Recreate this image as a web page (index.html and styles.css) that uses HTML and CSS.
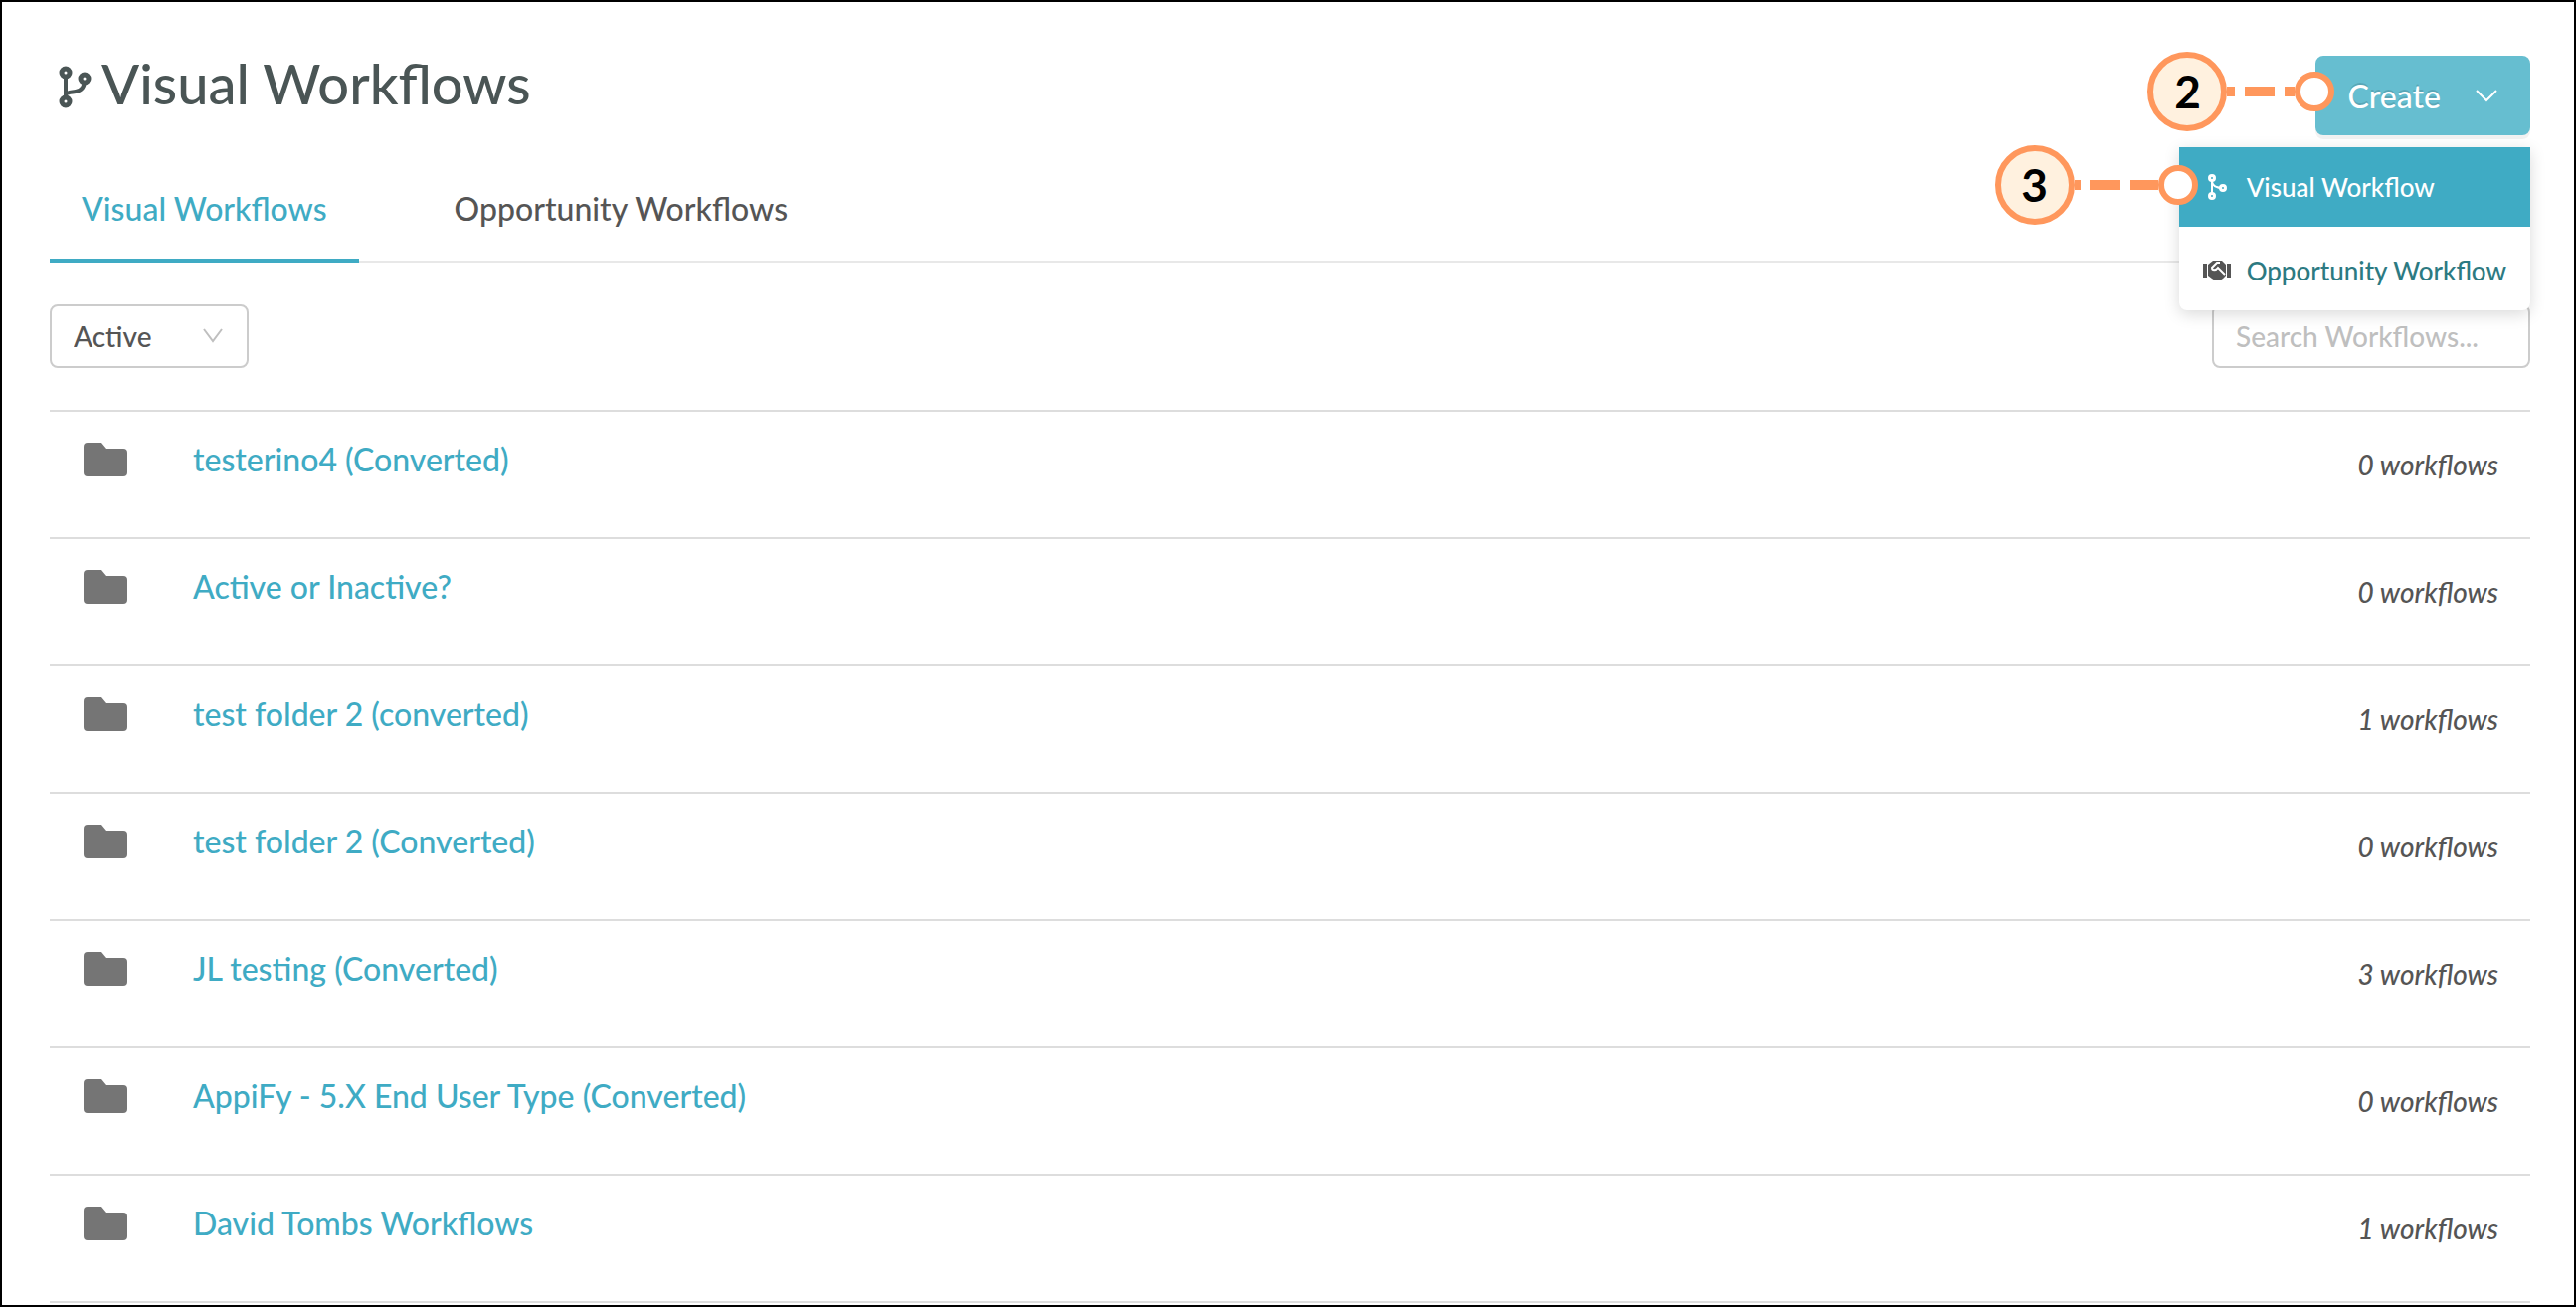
FILE: index.html
```html
<!DOCTYPE html>
<html lang="en">
    <head>
        <meta charset="UTF-8">
        <meta name="viewport" content="width=device-width, initial-scale=1.0">
        <title>Visual Workflows</title>
        <link rel="stylesheet" href="styles.css">
    </head>
    <body>
        <svg class="sprite" aria-hidden="true">
            <symbol id="folder" viewBox="0 0 44 34">
                <path d="M4 0h14l5 6h17a4 4 0 0 1 4 4v20a4 4 0 0 1-4 4H4a4 4 0 0 1-4-4V4a4 4 0 0 1 4-4z"/>
            </symbol>
        </svg>
        <header class="header">
            <h1 class="title">
                <svg class="title-icon" viewBox="0 0 44 52" aria-hidden="true">
                    <path d="M16 15v29M16 37c1-2 4-2 10-3 7-1 9-6 9-12"/>
                    <circle cx="16" cy="15" r="4"/>
                    <circle cx="35" cy="21" r="4"/>
                    <circle cx="16" cy="44" r="4"/>
                </svg>
                Visual Workflows
            </h1>
            <div class="create">
                <button class="create-button" type="button" aria-expanded="true">
                    Create
                    <svg class="create-arrow" viewBox="0 0 24 16" aria-hidden="true"><path d="M2 3l10 10L22 3"/></svg>
                </button>
                <div class="callout">
                    <span class="callout-number">2</span>
                    <svg class="callout-line" viewBox="0 0 68 10" aria-hidden="true"><path d="M0 0h8v10H0zM18 0h30v10H18zM58 0h10v10H58z"/></svg>
                    <span class="callout-dot"></span>
                </div>
                <ul class="menu">
                    <li class="menu-item">
                        <button class="menu-button active" type="button">
                            <svg class="menu-icon branch" viewBox="0 0 28 28" aria-hidden="true">
                                <path d="M9 5v18M9 9c1 5 5 6 11 6"/>
                                <circle cx="9" cy="5" r="2.5"/>
                                <circle cx="9" cy="23" r="2.5"/>
                                <circle cx="20" cy="15" r="2.5"/>
                            </svg>
                            Visual Workflow
                        </button>
                        <div class="callout">
                            <span class="callout-number">3</span>
                            <svg class="callout-line wide" viewBox="0 0 84 10" aria-hidden="true"><path d="M0 0h6v10H0zM15 0h31v10H15zM56 0h28v10H56z"/></svg>
                            <span class="callout-dot"></span>
                        </div>
                    </li>
                    <li class="menu-item">
                        <button class="menu-button" type="button">
                            <svg class="menu-icon" viewBox="0 0 28 28" aria-hidden="true">
                                <path d="M0 7h4v14H0zM24 7h4v14h-4zM5 8l5-4h9l4 4v11l-3 3-3 2h-5l-3-2-4-3z"/>
                                <path class="grip" d="M17 6h-3l-5 5c0 3 4 3 6 0l7 7"/>
                            </svg>
                            Opportunity Workflow
                        </button>
                    </li>
                </ul>
            </div>
        </header>
        <nav class="tabs">
            <a class="tab active" href="#visual">Visual Workflows</a>
            <a class="tab" href="#opportunity">Opportunity Workflows</a>
        </nav>
        <div class="filters">
            <div class="status">
                <select class="status-select" aria-label="Status">
                    <option>Active</option>
                    <option>Inactive</option>
                </select>
                <svg class="status-arrow" viewBox="0 0 20 16" aria-hidden="true"><path d="M1 1l9 12 9-12"/></svg>
            </div>
            <input class="search" type="text" placeholder="Search Workflows..." aria-label="Search Workflows">
        </div>
        <ul class="folders">
            <li class="folder">
                <svg class="folder-icon" aria-hidden="true"><use href="#folder"/></svg>
                <a class="folder-name" href="#">testerino4 (Converted)</a>
                <span class="folder-count">0 workflows</span>
            </li>
            <li class="folder">
                <svg class="folder-icon" aria-hidden="true"><use href="#folder"/></svg>
                <a class="folder-name" href="#">Active or Inactive?</a>
                <span class="folder-count">0 workflows</span>
            </li>
            <li class="folder">
                <svg class="folder-icon" aria-hidden="true"><use href="#folder"/></svg>
                <a class="folder-name" href="#">test folder 2 (converted)</a>
                <span class="folder-count">1 workflows</span>
            </li>
            <li class="folder">
                <svg class="folder-icon" aria-hidden="true"><use href="#folder"/></svg>
                <a class="folder-name" href="#">test folder 2 (Converted)</a>
                <span class="folder-count">0 workflows</span>
            </li>
            <li class="folder">
                <svg class="folder-icon" aria-hidden="true"><use href="#folder"/></svg>
                <a class="folder-name" href="#">JL testing (Converted)</a>
                <span class="folder-count">3 workflows</span>
            </li>
            <li class="folder">
                <svg class="folder-icon" aria-hidden="true"><use href="#folder"/></svg>
                <a class="folder-name" href="#">AppiFy - 5.X End User Type (Converted)</a>
                <span class="folder-count">0 workflows</span>
            </li>
            <li class="folder">
                <svg class="folder-icon" aria-hidden="true"><use href="#folder"/></svg>
                <a class="folder-name" href="#">David Tombs Workflows</a>
                <span class="folder-count">1 workflows</span>
            </li>
        </ul>
    </body>
</html>
```
FILE: styles.css
```css
* {
    box-sizing: border-box;
}
body {
    background: white;
    border: 2px solid black;
    color: #555;
    font-family: Lato, sans-serif;
    font-size: 28px;
    font-weight: 500;
    margin: 0;
    min-height: 100vh;
    padding: 54px 44px 2px 48px;
}
button, input, select {
    font: inherit;
}
a {
    text-decoration: none;
}
ul {
    list-style: none;
    margin: 0;
    padding: 0;
}
.sprite {
    display: none;
}
.header {
    align-items: flex-start;
    display: flex;
    justify-content: space-between;
    margin-bottom: 26px;
}
.title {
    align-items: center;
    color: #4a5555;
    display: flex;
    font-size: 56px;
    font-weight: 500;
    gap: 8px;
    line-height: 56px;
    margin: 0;
}
.title-icon {
    fill: none;
    height: 52px;
    stroke: #4a5555;
    stroke-width: 5;
    width: 44px;
}
.title-icon path {
    stroke-width: 4;
}
.title-icon circle {
    fill: white;
}
.create {
    position: relative;
}
.create-button {
    align-items: center;
    background: #66bed0;
    border: 0;
    border-radius: 8px;
    box-shadow: 0 4px 0 rgba(0, 0, 0, 0.05);
    color: white;
    cursor: pointer;
    display: flex;
    font-size: 32px;
    gap: 34px;
    height: 80px;
    padding: 0 32px;
    text-shadow: 0 -2px 0 rgba(0, 0, 0, 0.12);
}
.create-arrow {
    fill: none;
    height: 16px;
    stroke: white;
    stroke-width: 2;
    width: 24px;
}
.menu {
    background: white;
    border-radius: 0 0 8px 8px;
    box-shadow: 0 4px 16px rgba(0, 0, 0, 0.15);
    display: grid;
    gap: 4px;
    position: absolute;
    right: 0;
    top: 92px;
    z-index: 1;
}
.menu-item {
    position: relative;
}
.menu-button {
    align-items: center;
    background: none;
    border: 0;
    color: #2c7a82;
    cursor: pointer;
    display: flex;
    font-size: 26px;
    gap: 16px;
    height: 80px;
    padding: 0 24px;
    white-space: nowrap;
    width: 100%;
}
.menu-button.active {
    background: #3fabc4;
    color: white;
}
.menu-icon {
    fill: #555;
    height: 28px;
    width: 28px;
}
.menu-icon.branch {
    fill: #3fabc4;
    stroke: white;
    stroke-width: 3;
}
.menu-icon .grip {
    fill: none;
    stroke: white;
    stroke-width: 2;
}
.menu-icon.branch path {
    fill: none;
    stroke-width: 2;
}
.callout {
    align-items: center;
    display: flex;
    position: absolute;
    right: calc(100% - 19px);
    top: -4px;
    z-index: 2;
}
.menu .callout {
    top: -2px;
}
.callout-number {
    background: #fff1df;
    border: 6px solid #ff975c;
    border-radius: 50%;
    color: black;
    font-size: 46px;
    font-weight: bold;
    height: 80px;
    line-height: 68px;
    text-align: center;
    width: 80px;
}
.callout-line {
    fill: #ff975c;
    height: 10px;
    width: 68px;
}
.callout-line.wide {
    width: 84px;
}
.callout-dot {
    background: white;
    border: 6px solid #ff975c;
    border-radius: 50%;
    height: 40px;
    width: 40px;
}
.tabs {
    box-shadow: inset 0 -2px 0 #e8e8e8;
    display: flex;
    gap: 64px;
}
.tab {
    border-bottom: 4px solid transparent;
    color: #555;
    font-size: 32px;
    line-height: 48px;
    padding: 24px 32px 26px;
}
.tab.active {
    border-color: #3fabc4;
    color: #3fabc4;
}
.filters {
    display: flex;
    justify-content: space-between;
    margin: 42px 0;
}
.status {
    position: relative;
}
.status-select,
.search {
    background: white;
    border: 2px solid #ccc;
    border-radius: 8px;
    color: #555;
    height: 64px;
    padding: 0 22px;
}
.status-select {
    appearance: none;
    width: 200px;
}
.status-arrow {
    fill: none;
    height: 16px;
    pointer-events: none;
    position: absolute;
    right: 26px;
    stroke: #bfbfbf;
    stroke-width: 2;
    top: 24px;
    width: 20px;
}
.search {
    width: 320px;
}
.search::placeholder {
    color: #bfbfbf;
}
.folders {
    border-bottom: 2px solid #ddd;
}
.folder {
    align-items: flex-start;
    border-top: 2px solid #ddd;
    display: flex;
    height: 128px;
    padding: 24px 32px 0 34px;
}
.folder-icon {
    fill: #757575;
    height: 48px;
    margin-right: 66px;
    width: 44px;
}
.folder-name {
    color: #3fabc4;
    flex: 1;
    font-size: 32px;
    line-height: 48px;
}
.folder-count {
    font-style: italic;
    line-height: 58px;
}
```
